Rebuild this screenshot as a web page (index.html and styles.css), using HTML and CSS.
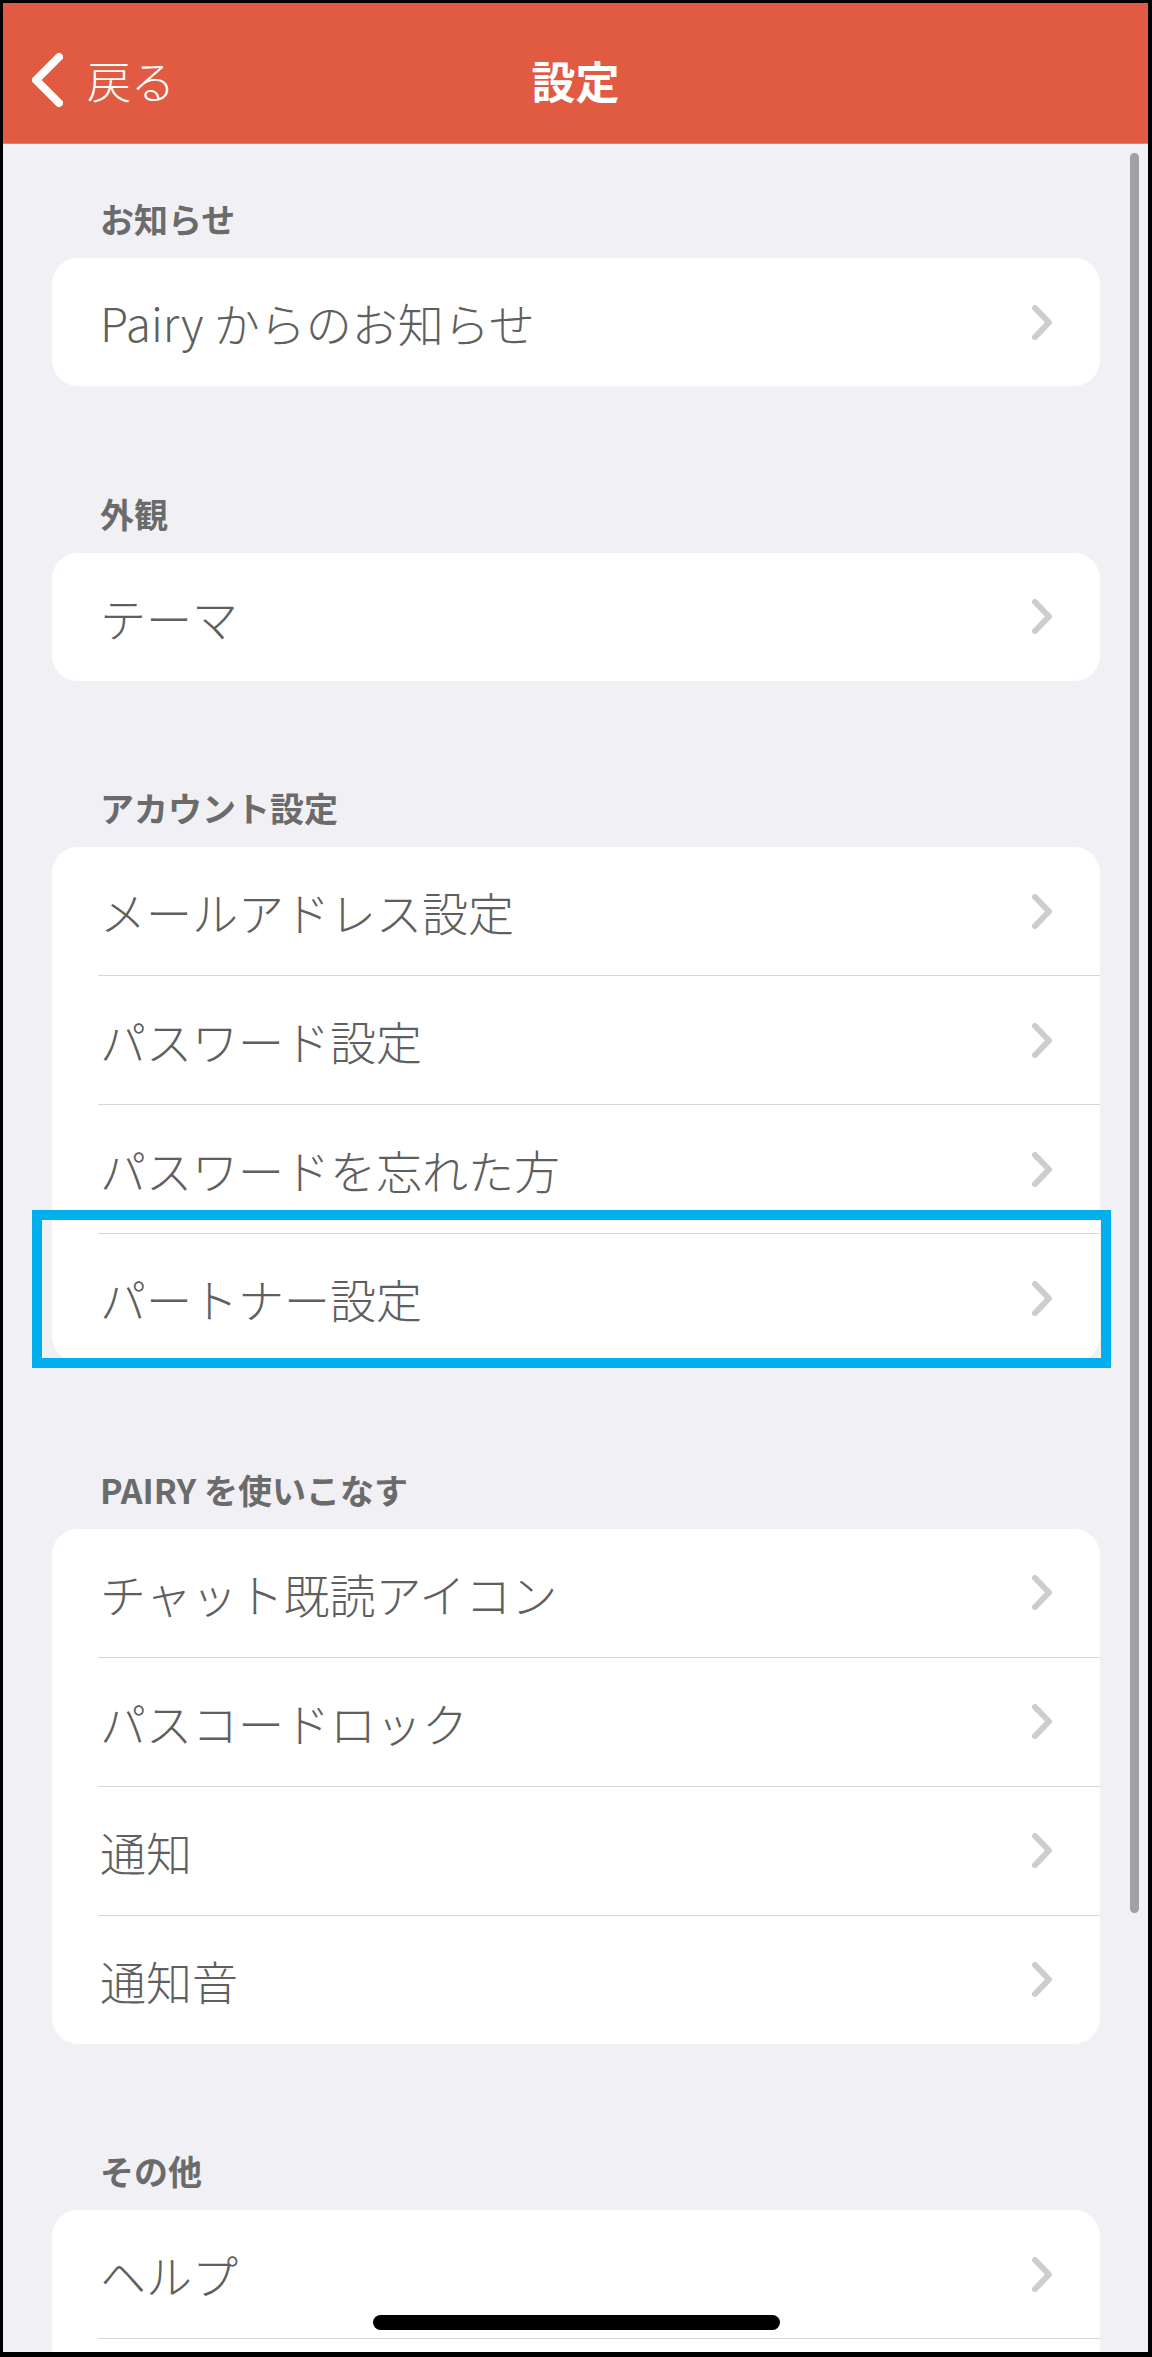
FILE: index.html
```html
<!DOCTYPE html>
<html lang="ja">

<head>
  <meta charset="UTF-8">
  <meta name="viewport" content="width=device-width, initial-scale=1.0">
  <title>設定</title>
  <link rel="stylesheet" href="styles.css">
</head>

<body>
  <div class="screen">
    <header class="nav">
      <a class="back" href="#">
        <svg class="back-icon" width="31" height="54" viewBox="0 0 31 54">
          <polyline points="27,4 4,27 27,50" />
        </svg>
        <span>戻る</span>
      </a>
      <h1>設定</h1>
      <span></span>
    </header>

    <main class="content">
      <section class="group">
        <h2>お知らせ</h2>
        <ul class="card">
          <li class="row"><span>Pairy からのお知らせ</span><svg class="chev" viewBox="0 0 21 35"><polyline points="3,3 17,17.5 3,32" /></svg></li>
        </ul>
      </section>

      <section class="group">
        <h2>外観</h2>
        <ul class="card">
          <li class="row"><span>テーマ</span><svg class="chev" viewBox="0 0 21 35"><polyline points="3,3 17,17.5 3,32" /></svg></li>
        </ul>
      </section>

      <section class="group">
        <h2>アカウント設定</h2>
        <ul class="card">
          <li class="row"><span>メールアドレス設定</span><svg class="chev" viewBox="0 0 21 35"><polyline points="3,3 17,17.5 3,32" /></svg></li>
          <li class="row"><span>パスワード設定</span><svg class="chev" viewBox="0 0 21 35"><polyline points="3,3 17,17.5 3,32" /></svg></li>
          <li class="row"><span>パスワードを忘れた方</span><svg class="chev" viewBox="0 0 21 35"><polyline points="3,3 17,17.5 3,32" /></svg></li>
          <li class="row marked"><span>パートナー設定</span><svg class="chev" viewBox="0 0 21 35"><polyline points="3,3 17,17.5 3,32" /></svg></li>
        </ul>
      </section>

      <section class="group">
        <h2>PAIRY を使いこなす</h2>
        <ul class="card">
          <li class="row"><span>チャット既読アイコン</span><svg class="chev" viewBox="0 0 21 35"><polyline points="3,3 17,17.5 3,32" /></svg></li>
          <li class="row"><span>パスコードロック</span><svg class="chev" viewBox="0 0 21 35"><polyline points="3,3 17,17.5 3,32" /></svg></li>
          <li class="row"><span>通知</span><svg class="chev" viewBox="0 0 21 35"><polyline points="3,3 17,17.5 3,32" /></svg></li>
          <li class="row"><span>通知音</span><svg class="chev" viewBox="0 0 21 35"><polyline points="3,3 17,17.5 3,32" /></svg></li>
        </ul>
      </section>

      <section class="group">
        <h2>その他</h2>
        <ul class="card">
          <li class="row"><span>ヘルプ</span><svg class="chev" viewBox="0 0 21 35"><polyline points="3,3 17,17.5 3,32" /></svg></li>
          <li class="row"></li>
        </ul>
      </section>
    </main>

    <div class="scrollbar"></div>
    <div class="home-bar"></div>
  </div>
</body>

</html>
```

FILE: styles.css
```css
html,
body {
  margin: 0;
  padding: 0;
}

body {
  font-family: "Noto Sans CJK JP", "Noto Sans", sans-serif;
}

.screen {
  position: relative;
  box-sizing: border-box;
  width: 1152px;
  height: 2357px;
  overflow: hidden;
  border-style: solid;
  border-color: #000;
  border-width: 3px 4px 5px 3px;
  background-color: #f1f0f5;
}

/* top bar */

.nav {
  box-sizing: border-box;
  height: 141px;
  padding: 14px 29px 0 29px;
  display: grid;
  grid-template-columns: 1fr auto 1fr;
  align-items: center;
  background-color: #e05b42;
  border-bottom: 1px solid #e7806c;
}

.back {
  display: flex;
  align-items: center;
  gap: 24px;
  color: #fff;
  text-decoration: none;
  font-size: 44px;
  font-weight: 300;
  line-height: 1;
}

.back-icon polyline {
  fill: none;
  stroke: #fff;
  stroke-width: 8;
  stroke-linecap: round;
  stroke-linejoin: round;
}

.nav h1 {
  margin: 0;
  color: #fff;
  font-size: 44px;
  font-weight: 700;
  line-height: 1;
}

/* list */

.content {
  padding: 50px 48px 0 49px;
}

.group + .group {
  margin-top: 102.5px;
}

.group h2 {
  margin: 0 0 14px;
  padding-left: 48px;
  font-size: 34px;
  font-weight: 700;
  line-height: 50px;
  color: #6b6b6b;
}

.card {
  margin: 0;
  padding: 0;
  list-style: none;
  background-color: #fff;
  border-radius: 26px;
}

.row {
  position: relative;
  height: 128px;
  margin-left: 46px;
  padding: 0 47px 0 2px;
  display: flex;
  align-items: center;
  justify-content: space-between;
  font-size: 46px;
  font-weight: 300;
  color: #5f5f5f;
}

.row + .row {
  border-top: 1px solid #d6d6d6;
}

.chev {
  width: 21px;
  height: 35px;
}

.chev polyline {
  fill: none;
  stroke: #cdcdcd;
  stroke-width: 6;
  stroke-linecap: round;
  stroke-linejoin: round;
}

.marked::after {
  content: "";
  position: absolute;
  top: -24px;
  bottom: -6px;
  left: -66px;
  right: -11px;
  border: 10px solid #00afec;
}

/* overlays */

.scrollbar {
  position: absolute;
  top: 150px;
  left: 1127px;
  width: 9px;
  height: 1760px;
  border-radius: 5px;
  background-color: #a1a1a1;
}

.home-bar {
  position: absolute;
  top: 2312px;
  left: 370px;
  width: 407px;
  height: 15px;
  border-radius: 8px;
  background-color: #000;
}
```
